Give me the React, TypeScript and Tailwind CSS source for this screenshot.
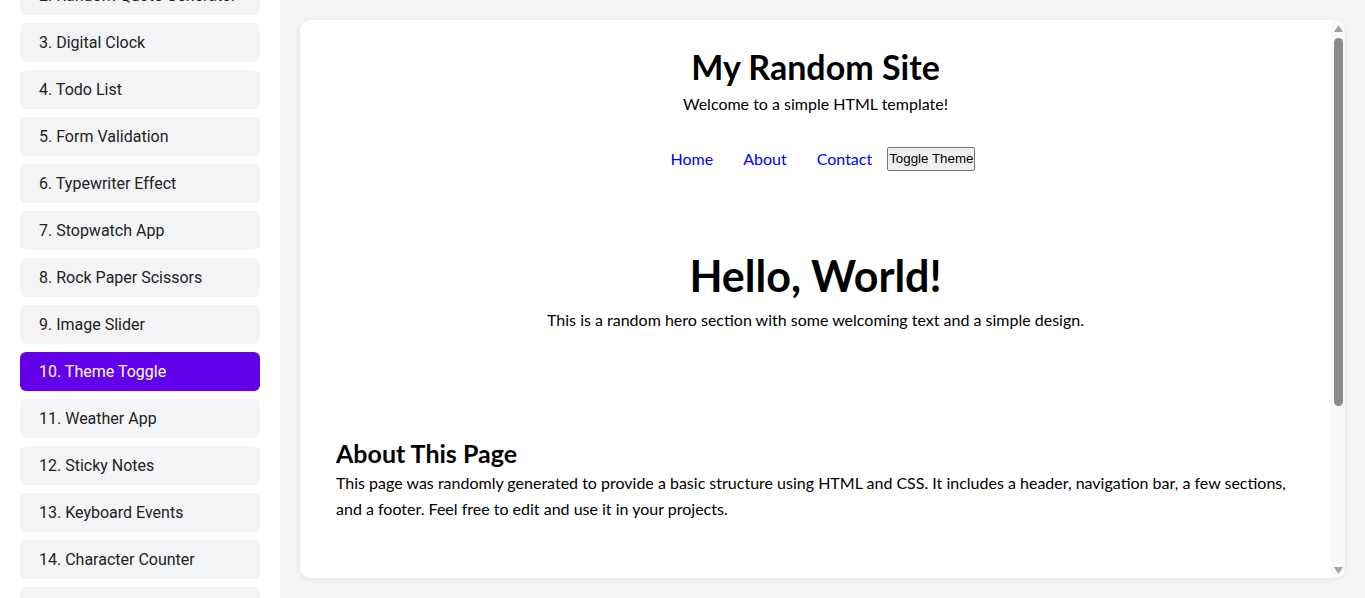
import React from 'react'

const projects = [
  '1. Random Color Generator',
  '2. Random Quote Generator',
  '3. Digital Clock',
  '4. Todo List',
  '5. Form Validation',
  '6. Typewriter Effect',
  '7. Stopwatch App',
  '8. Rock Paper Scissors',
  '9. Image Slider',
  '10. Theme Toggle',
  '11. Weather App',
  '12. Sticky Notes',
  '13. Keyboard Events',
  '14. Character Counter',
  '15. Password Generator',
]

const Sidebar = () => (
  <aside className="w-[280px] shrink-0 h-full bg-white overflow-hidden">
    <ul className="px-5 flex flex-col gap-2 mt-[-71px]">
      {projects.map((p) => (
        <li
          key={p}
          className={
            p.startsWith('10.')
              ? 'h-[39px] flex items-center pl-[19px] rounded-md bg-[#6200ea] text-white text-[16px]'
              : 'h-[39px] flex items-center pl-[19px] rounded-md bg-[#f3f4f6] text-[#222] text-[16px]'
          }
        >
          {p}
        </li>
      ))}
    </ul>
  </aside>
)

const Scrollbar = () => (
  <div className="w-[14px] shrink-0 bg-[#f9f9f9] flex flex-col items-center pt-[5px] pb-[4px]">
    <svg width="9" height="7" viewBox="0 0 9 7">
      <path d="M4.5 0 L9 7 L0 7 Z" fill="#a3a3a3" />
    </svg>
    <div className="w-[9px] h-[368px] mt-[6px] rounded-full bg-[#8b8b8b]" />
    <div className="flex-1" />
    <svg width="9" height="7" viewBox="0 0 9 7">
      <path d="M0 0 L9 0 L4.5 7 Z" fill="#a3a3a3" />
    </svg>
  </div>
)

const Preview = () => (
  <div className="flex-1 overflow-hidden text-black font-['Lato','Noto_Sans',sans-serif]">
    <header className="pt-[28px] text-center">
      <h1 className="text-[34px] leading-[38px] font-bold">My Random Site</h1>
      <p className="mt-2 text-[16px] leading-[20px]">Welcome to a simple HTML template!</p>
      <nav className="mt-[33px] flex justify-center items-center h-[24px]">
        <a className="mx-[15px] text-[#0000ff] text-[16px]">Home</a>
        <a className="mx-[15px] text-[#0000ff] text-[16px]">About</a>
        <a className="mx-[15px] text-[#0000ff] text-[16px]">Contact</a>
        <button className="h-[24px] px-[1px] border border-[#767676] rounded-[2px] bg-[#efefef] text-[13.33px] font-['Liberation_Sans',Arial,sans-serif]">
          Toggle Theme
        </button>
      </nav>
    </header>

    <section className="mt-[77px] text-center">
      <h2 className="text-[43px] leading-[56px] font-bold">Hello, World!</h2>
      <p className="mt-[6px] text-[16px] leading-[20px]">
        This is a random hero section with some welcoming text and a simple design.
      </p>
    </section>

    <section className="mt-[108px] px-9">
      <h2 className="text-[25px] leading-[30px] font-bold">About This Page</h2>
      <p className="mt-[2px] text-[16px] leading-[26px]">
        This page was randomly generated to provide a basic structure using HTML and CSS. It includes a header,
        navigation bar, a few sections, and a footer. Feel free to edit and use it in your projects.
      </p>
    </section>
  </div>
)

export default function App() {
  return (
    <div className="w-[1365px] h-[598px] flex bg-[#f3f4f6] font-['Roboto',sans-serif] overflow-hidden">
      <Sidebar />
      <main className="flex-1 p-5">
        <div className="h-full bg-white rounded-[10px] shadow-[0_1px_4px_rgba(0,0,0,0.08)] overflow-hidden flex">
          <Preview />
          <Scrollbar />
        </div>
      </main>
    </div>
  )
}
